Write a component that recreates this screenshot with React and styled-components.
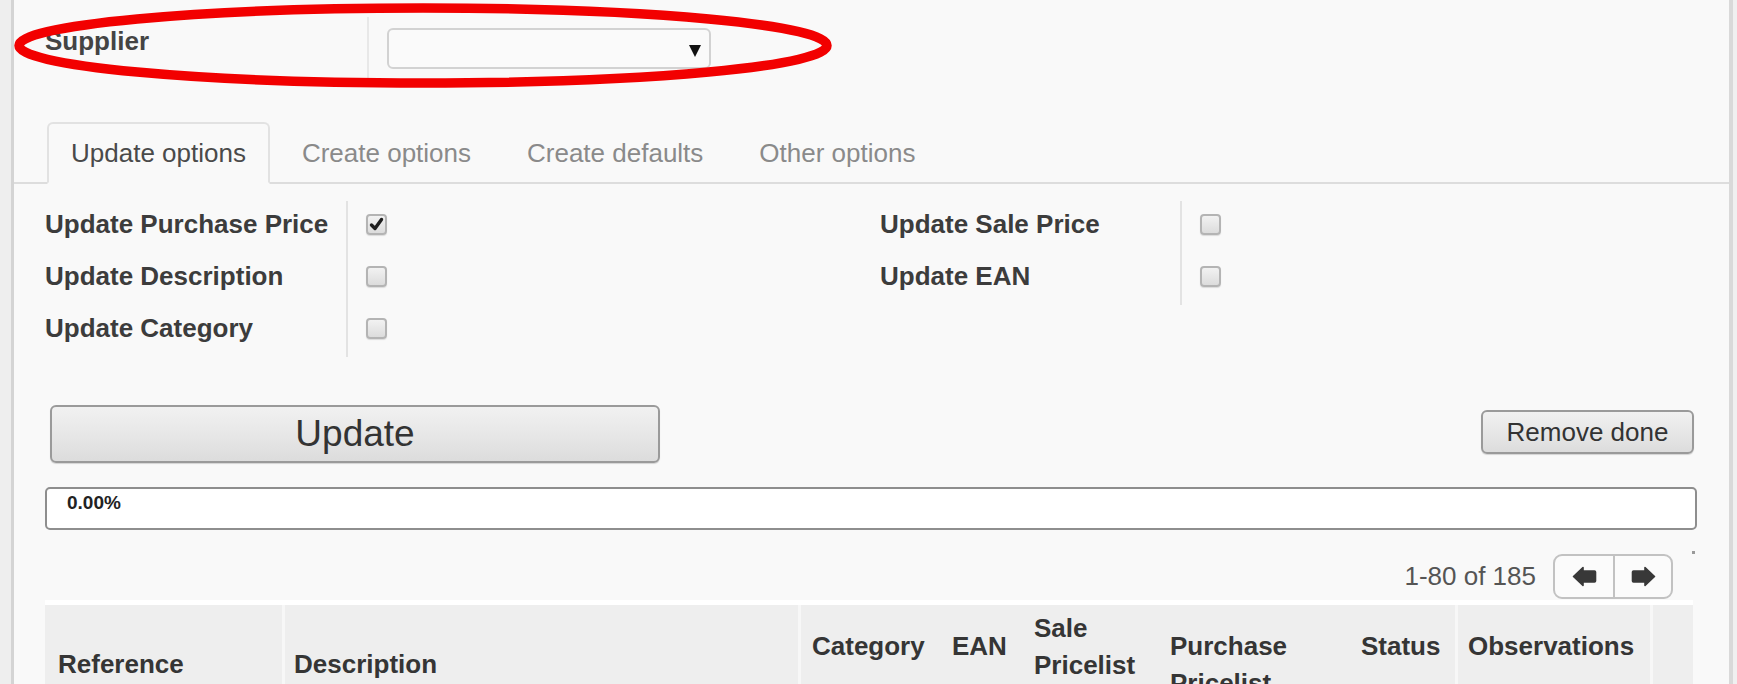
import React from 'react';
import styled, { createGlobalStyle } from 'styled-components';

const GlobalStyle = createGlobalStyle`
  *, *::before, *::after { box-sizing: border-box; }
  html, body {
    margin: 0;
    padding: 0;
    overflow: hidden;
    background: #f9f9f9;
  }
  body {
    font-family: 'Liberation Sans', Arial, sans-serif;
    color: #333;
  }
`

const arrowLeft = <svg width="25" height="21" viewBox="0 0 25 21">
  <path d="M1.5 10.5 L11 1.5 L11 5 L22.5 5 Q23.5 5 23.5 6 L23.5 15 Q23.5 16 22.5 16 L11 16 L11 19.5 Z" fill="#383838" stroke="#383838" strokeWidth="1.6" strokeLinejoin="round"/>
</svg>

const arrowRight = <svg width="25" height="21" viewBox="0 0 25 21">
  <path d="M23.5 10.5 L14 1.5 L14 5 L2.5 5 Q1.5 5 1.5 6 L1.5 15 Q1.5 16 2.5 16 L14 16 L14 19.5 Z" fill="#383838" stroke="#383838" strokeWidth="1.6" strokeLinejoin="round"/>
</svg>

const checkMark = <svg width="17" height="17" viewBox="0 0 17 17">
  <path d="M3.5 9 L7 12.5 L13.5 3.5" stroke="#1e1e1e" strokeWidth="3.4" fill="none" strokeLinecap="round" strokeLinejoin="round"/>
</svg>

const leftOptions = ["Update Purchase Price", "Update Description", "Update Category"];
const rightOptions = ["Update Sale Price", "Update EAN"];

const columns = [
    { label: "Reference", pad: 13, top: 41 },
    { label: "Description", pad: 9, top: 41, sep: true },
    { label: "Category", pad: 11, top: 23, sep: true },
    { label: "EAN", pad: 14, top: 23 },
    { label: "Sale Pricelist", pad: 14, top: 5 },
    { label: "Purchase Pricelist", pad: 14, top: 23 },
    { label: "Status", pad: 14, top: 23 },
    { label: "Observations", pad: 10, top: 23, sep: true },
    { label: "", pad: 0, top: 23, sep: true },
];

const App = () => {
    return (
    <Shell>
        <GlobalStyle />
        <LeftRail />
        <Sheet>
            <FieldRow>
                <FieldLabel>Supplier</FieldLabel>
                <SelectBox>
                    <SelectCaret />
                </SelectBox>
            </FieldRow>

            <TabBar>
                <Tab $active>Update options</Tab>
                <Tab>Create options</Tab>
                <Tab>Create defaults</Tab>
                <Tab>Other options</Tab>
            </TabBar>

            <OptionsGrid>
                {leftOptions.map((label, i) => (
                    <React.Fragment key={label}>
                        <OptionLabel style={{ gridRow: i + 1, gridColumn: 1 }}>{label}</OptionLabel>
                        <OptionValue style={{ gridRow: i + 1, gridColumn: 2 }}>
                            <CheckBox>{i === 0 && checkMark}</CheckBox>
                        </OptionValue>
                    </React.Fragment>
                ))}
                {rightOptions.map((label, i) => (
                    <React.Fragment key={label}>
                        <OptionLabel style={{ gridRow: i + 1, gridColumn: 3 }}>{label}</OptionLabel>
                        <OptionValue style={{ gridRow: i + 1, gridColumn: 4 }}>
                            <CheckBox />
                        </OptionValue>
                    </React.Fragment>
                ))}
            </OptionsGrid>

            <ActionRow>
                <UpdateButton>Update</UpdateButton>
                <RemoveButton>Remove done</RemoveButton>
            </ActionRow>

            <ProgressBar>0.00%</ProgressBar>

            <PagerRow>
                <PagerText>1-80 of 185</PagerText>
                <PagerGroup>
                    <PagerButton>{arrowLeft}</PagerButton>
                    <PagerButton $divider>{arrowRight}</PagerButton>
                </PagerGroup>
                <Speck />
            </PagerRow>

            <ListHeader>
                {columns.map((c, i) => (
                    <HeaderCell key={i} $pad={c.pad} $top={c.top} $sep={c.sep}>
                        {c.label}
                    </HeaderCell>
                ))}
            </ListHeader>
        </Sheet>
        <RightRail />

        <Annotation width="860" height="100" viewBox="0 0 860 100">
            <ellipse cx="423" cy="45.5" rx="404" ry="37.5" fill="none" stroke="#f20000" strokeWidth="9.5" />
        </Annotation>
    </Shell>
    )
}

const Shell = styled.div`
    position : relative;
    display : flex;
    width : 1737px;
    height : 684px;
    overflow : hidden;
    background : #f9f9f9;
`

const LeftRail = styled.div`
    flex : 0 0 14px;
    background : #eeeeee;
    border-right : 3px solid #d4d4d4;
`

const RightRail = styled.div`
    flex : 0 0 8px;
    background : #f0f0f0;
    border-left : 4px solid #d9d9d9;
`

const Sheet = styled.div`
    flex : 1;
    min-width : 0;
    background : #f9f9f9;
`

const FieldRow = styled.div`
    display : flex;
    height : 61px;
    margin : 17px 0 0 31px;
`

const FieldLabel = styled.div`
    width : 324px;
    border-right : 2px solid #e8e8e8;
    padding-top : 9px;
    font-size : 26px;
    line-height : 30px;
    font-weight : bold;
    color : #444;
`

const SelectBox = styled.div`
    width : 324px;
    height : 41px;
    margin : 11px 0 0 18px;
    border : 2px solid #d2d2d2;
    border-radius : 6px;
    background : #fafafa;
    display : flex;
    align-items : center;
    justify-content : flex-end;
    padding : 4px 8px 0 0;
`

const SelectCaret = styled.span`
    width : 0;
    height : 0;
    border-left : 6px solid transparent;
    border-right : 6px solid transparent;
    border-top : 12px solid #111;
`

const TabBar = styled.div`
    display : flex;
    margin-top : 44px;
    padding-left : 33px;
    border-bottom : 2px solid #dddddd;
`

const Tab = styled.div`
    height : 62px;
    margin : 0 8px -2px 0;
    padding : 0 22px;
    display : flex;
    align-items : center;
    font-size : 26px;
    color : ${p => p.$active ? '#4a4a4a' : '#8a8a8a'};
    background : ${p => p.$active ? '#f9f9f9' : 'transparent'};
    border : 2px solid ${p => p.$active ? '#e2e2e2' : 'transparent'};
    border-bottom-color : ${p => p.$active ? '#f9f9f9' : 'transparent'};
    border-radius : 6px 6px 0 0;
`

const OptionsGrid = styled.div`
    display : grid;
    grid-template-columns : 303px 532px 302px 1fr;
    grid-auto-rows : 52px;
    margin : 17px 32px 0 31px;
`

const OptionLabel = styled.div`
    display : flex;
    align-items : center;
    padding-bottom : 6px;
    border-right : 2px solid #e3e3e3;
    font-size : 26px;
    font-weight : bold;
    color : #3c3c3c;
`

const OptionValue = styled.div`
    display : flex;
    align-items : center;
    padding : 0 0 5px 18px;
`

const CheckBox = styled.span`
    width : 21px;
    height : 21px;
    border : 2px solid #b4b4b4;
    border-radius : 4px;
    background : linear-gradient(#f2f2f2, #dcdcdc);
    box-shadow : 0 1px 1px rgba(0, 0, 0, 0.12);
    display : flex;
    align-items : center;
    justify-content : center;
`

const ActionRow = styled.div`
    display : flex;
    justify-content : space-between;
    align-items : flex-start;
    margin : 48px 35px 0 36px;
`

const UpdateButton = styled.button`
    width : 610px;
    height : 58px;
    border : 2px solid #9a9a9a;
    border-radius : 6px;
    background : linear-gradient(#f1f1f1 0%, #e6e6e6 55%, #dcdcdc 100%);
    box-shadow : 0 1px 1px rgba(0, 0, 0, 0.15);
    font-family : inherit;
    font-size : 37px;
    color : #333;
    padding : 0;
`

const RemoveButton = styled.button`
    width : 213px;
    height : 44px;
    margin-top : 5px;
    border : 2px solid #9a9a9a;
    border-radius : 6px;
    background : linear-gradient(#f1f1f1 0%, #e6e6e6 55%, #dcdcdc 100%);
    box-shadow : 0 1px 1px rgba(0, 0, 0, 0.15);
    font-family : inherit;
    font-size : 26px;
    color : #333;
    padding : 0;
`

const ProgressBar = styled.div`
    height : 43px;
    margin : 24px 32px 0 31px;
    padding : 3px 20px 0;
    border : 2px solid #8e8e8e;
    border-radius : 5px;
    background : #fff;
    font-size : 19px;
    line-height : 22px;
    font-weight : bold;
    color : #222;
`

const PagerRow = styled.div`
    display : flex;
    justify-content : flex-end;
    align-items : center;
    margin : 24px 34px 0 0;
`

const PagerText = styled.span`
    font-size : 26px;
    color : #555;
    margin-right : 17px;
`

const PagerGroup = styled.div`
    display : flex;
    height : 45px;
    border : 2px solid #c2c2c2;
    border-radius : 9px;
    background : #fbfbfb;
`

const PagerButton = styled.div`
    width : 58px;
    display : flex;
    align-items : center;
    justify-content : center;
    border-left : ${p => p.$divider ? '2px solid #c2c2c2' : 'none'};
`

const Speck = styled.span`
    align-self : flex-start;
    width : 3px;
    height : 3px;
    margin : -3px 0 0 19px;
    background : #9a9a9a;
`

const ListHeader = styled.div`
    display : grid;
    grid-template-columns : 237px 516px 140px 82px 136px 191px 108px 195px 1fr;
    margin : 1px 36px 0 31px;
    border-top : 5px solid #ffffff;
    background : #eeeeee;
    height : 140px;
`

const HeaderCell = styled.div`
    padding : ${p => p.$top}px 4px 0 ${p => p.$pad}px;
    border-left : ${p => p.$sep ? '3px solid #f7f7f7' : 'none'};
    font-size : 26px;
    line-height : 36.5px;
    font-weight : bold;
    color : #353535;
`

const Annotation = styled.svg`
    position : absolute;
    left : 0;
    top : 0;
    pointer-events : none;
`

export default App;
